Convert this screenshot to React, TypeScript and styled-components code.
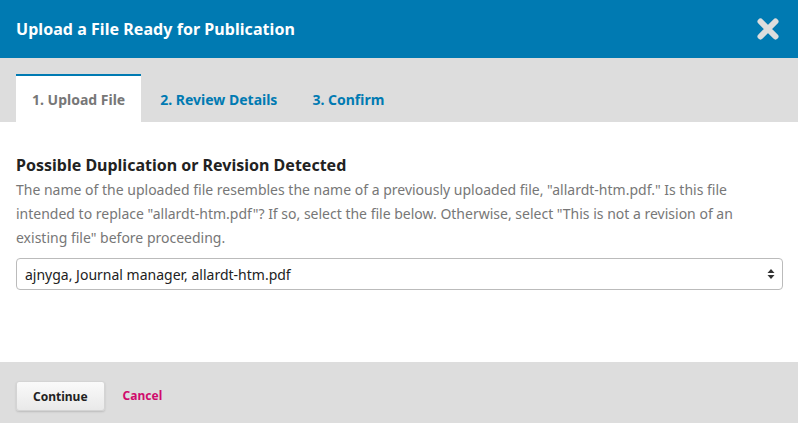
import React from 'react';
import styled, { createGlobalStyle } from 'styled-components';

const GlobalStyle = createGlobalStyle`
	html, body {
		margin: 0;
		padding: 0;
		background: #ffffff;
	}
	body {
		font-family: "Noto Sans", "Open Sans", sans-serif;
	}
	* {
		box-sizing: border-box;
	}
`;

const Modal = styled.div`
	display: flex;
	flex-flow: column nowrap;
	width: 798px;
	height: 423px;
	background: #fff;
`;

const Header = styled.div`
	display: flex;
	flex-flow: row nowrap;
	align-items: center;
	justify-content: space-between;
	height: 58px;
	padding: 0 19px 0 16px;
	background: #007ab2;
`;

const Title = styled.h2`
	margin: 0;
	font-size: 16px;
	font-weight: 700;
	color: #fff;
	letter-spacing: 0.05px;
`;

const CloseButton = styled.button`
	display: flex;
	align-items: center;
	justify-content: center;
	width: 23px;
	height: 23px;
	padding: 0;
	border: none;
	background: transparent;
	cursor: pointer;
`;

const TabBar = styled.div`
	display: flex;
	flex-flow: row nowrap;
	align-items: flex-end;
	height: 64px;
	padding: 0 16px;
	background: #ddd;
`;

const Tab = styled.div<{ $active?: boolean }>`
	display: flex;
	align-items: center;
	height: 48px;
	padding: 0 16px;
	margin-right: 3px;
	font-size: 14px;
	font-weight: 700;
	border-top: 2px solid ${props => (props.$active ? '#007ab2' : 'transparent')};
	background: ${props => (props.$active ? '#fff' : 'transparent')};
	color: ${props => (props.$active ? '#777' : '#007ab2')};
`;

const Body = styled.div`
	flex: 1;
	padding: 32px 16px 0;
`;

const Heading = styled.h3`
	margin: 0 0 2px;
	font-size: 16px;
	font-weight: 700;
	line-height: 22px;
	color: #222;
`;

const Description = styled.p`
	margin: 0 0 8px;
	font-size: 14px;
	line-height: 24px;
	color: #777;
`;

const SelectWrap = styled.div`
	position: relative;
	display: flex;
	align-items: center;
	height: 32px;
	width: 767px;
	padding: 0 8px;
	border: 1px solid #bbb;
	border-radius: 4px;
	background: #fff;
	font-size: 14px;
	color: #222;
`;

const SelectArrows = styled.span`
	position: absolute;
	right: 7px;
	top: 50%;
	transform: translateY(-50%);
	display: flex;
`;

const Footer = styled.div`
	display: flex;
	flex-flow: row nowrap;
	align-items: flex-start;
	gap: 18px;
	height: 61px;
	padding: 19px 16px 0;
	background: #ddd;
`;

const Button = styled.button`
	height: 30px;
	padding: 0 16px;
	font-family: inherit;
	font-size: 12px;
	font-weight: 700;
	color: #222;
	border: 1px solid #d4d4d4;
	border-radius: 3px;
	background: linear-gradient(#fafafa, #e9e9e9);
	box-shadow: 0 1px 2px rgba(0, 0, 0, 0.15);
	cursor: pointer;
`;

const CancelLink = styled.a`
	line-height: 30px;
	font-size: 12px;
	font-weight: 700;
	color: #d00a6c;
	text-decoration: none;
	cursor: pointer;
`;

const CloseIcon = () => (
	<svg width="22" height="22" viewBox="0 0 22 22">
		<path d="M3.5 3.5 L18.5 18.5 M18.5 3.5 L3.5 18.5" stroke="#ddd" strokeWidth="6" strokeLinecap="round" />
	</svg>
);

const SortIcon = () => (
	<svg width="8" height="12" viewBox="0 0 8 12">
		<path d="M4 1 L7.5 5 H0.5 Z M4 11 L7.5 7 H0.5 Z" fill="#333" />
	</svg>
);

export default function App() {
	return (
		<>
			<GlobalStyle />
			<Modal>
				<Header>
					<Title>Upload a File Ready for Publication</Title>
					<CloseButton aria-label="Close">
						<CloseIcon />
					</CloseButton>
				</Header>
				<TabBar>
					<Tab $active>1. Upload File</Tab>
					<Tab>2. Review Details</Tab>
					<Tab>3. Confirm</Tab>
				</TabBar>
				<Body>
					<Heading>Possible Duplication or Revision Detected</Heading>
					<Description>
						The name of the uploaded file resembles the name of a previously uploaded file, "allardt-htm.pdf." Is this file
						intended to replace "allardt-htm.pdf"? If so, select the file below. Otherwise, select "This is not a revision of an
						existing file" before proceeding.
					</Description>
					<SelectWrap>
						ajnyga, Journal manager, allardt-htm.pdf
						<SelectArrows>
							<SortIcon />
						</SelectArrows>
					</SelectWrap>
				</Body>
				<Footer>
					<Button>Continue</Button>
					<CancelLink>Cancel</CancelLink>
				</Footer>
			</Modal>
		</>
	);
}
